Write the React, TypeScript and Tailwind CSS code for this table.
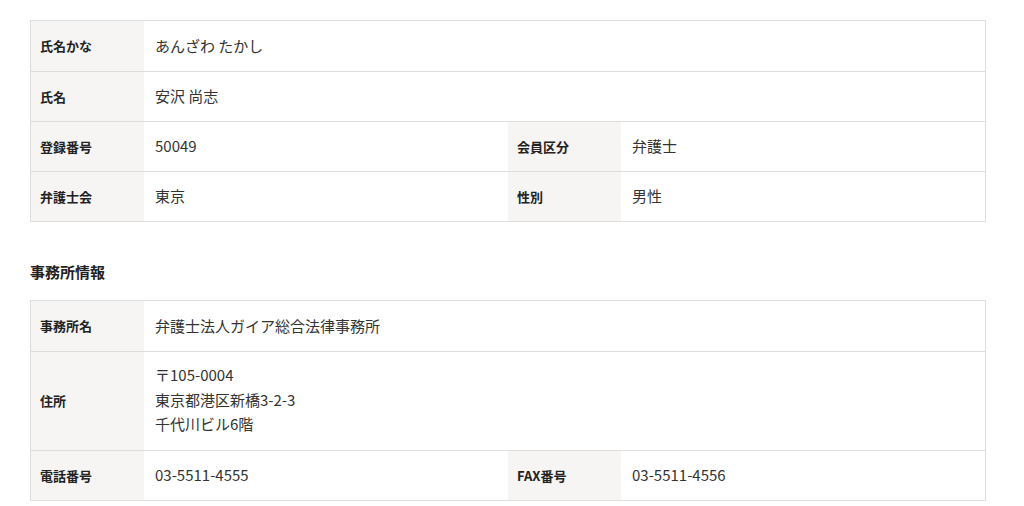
import React from "react";

const font = { fontFamily: '"Noto Sans CJK JP", "Noto Sans", sans-serif' };

function Label({ children }: { children: React.ReactNode }) {
  return (
    <div className="w-[113px] shrink-0 bg-[#f6f5f3] flex items-center pl-[9px] text-[13px] font-bold text-[#222]">
      {children}
    </div>
  );
}

function Value({ children }: { children: React.ReactNode }) {
  return (
    <div className="flex-1 flex items-center pl-[11px] text-[15px] text-[#333] leading-[24.5px]">
      {children}
    </div>
  );
}

function Row({ children, h = "h-[50px]" }: { children: React.ReactNode; h?: string }) {
  return <div className={`flex border-t border-[#dddddd] first:border-t-0 ${h}`}>{children}</div>;
}

function Half({ children }: { children: React.ReactNode }) {
  return <div className="flex w-1/2">{children}</div>;
}

export default function App() {
  return (
    <div className="w-[1024px] h-[506px] bg-white pl-[30px] pr-[38px] pt-[20px]" style={font}>
      <div className="border border-[#dddddd]">
        <Row>
          <Label>氏名かな</Label>
          <Value>あんざわ たかし</Value>
        </Row>
        <Row>
          <Label>氏名</Label>
          <Value>安沢 尚志</Value>
        </Row>
        <Row>
          <Half>
            <Label>登録番号</Label>
            <Value>50049</Value>
          </Half>
          <Half>
            <Label>会員区分</Label>
            <Value>弁護士</Value>
          </Half>
        </Row>
        <Row>
          <Half>
            <Label>弁護士会</Label>
            <Value>東京</Value>
          </Half>
          <Half>
            <Label>性別</Label>
            <Value>男性</Value>
          </Half>
        </Row>
      </div>

      <h2 className="mt-[39px] mb-[17px] text-[15px] font-bold text-[#222] leading-[22px]">事務所情報</h2>

      <div className="border border-[#dddddd]">
        <Row>
          <Label>事務所名</Label>
          <Value>弁護士法人ガイア総合法律事務所</Value>
        </Row>
        <Row h="h-[99px]">
          <Label>住所</Label>
          <Value>
            <div className="-mt-[2px]">
              〒105-0004
              <br />
              東京都港区新橋3-2-3
              <br />
              千代川ビル6階
            </div>
          </Value>
        </Row>
        <Row>
          <Half>
            <Label>電話番号</Label>
            <Value>03-5511-4555</Value>
          </Half>
          <Half>
            <Label>FAX番号</Label>
            <Value>03-5511-4556</Value>
          </Half>
        </Row>
      </div>
    </div>
  );
}
